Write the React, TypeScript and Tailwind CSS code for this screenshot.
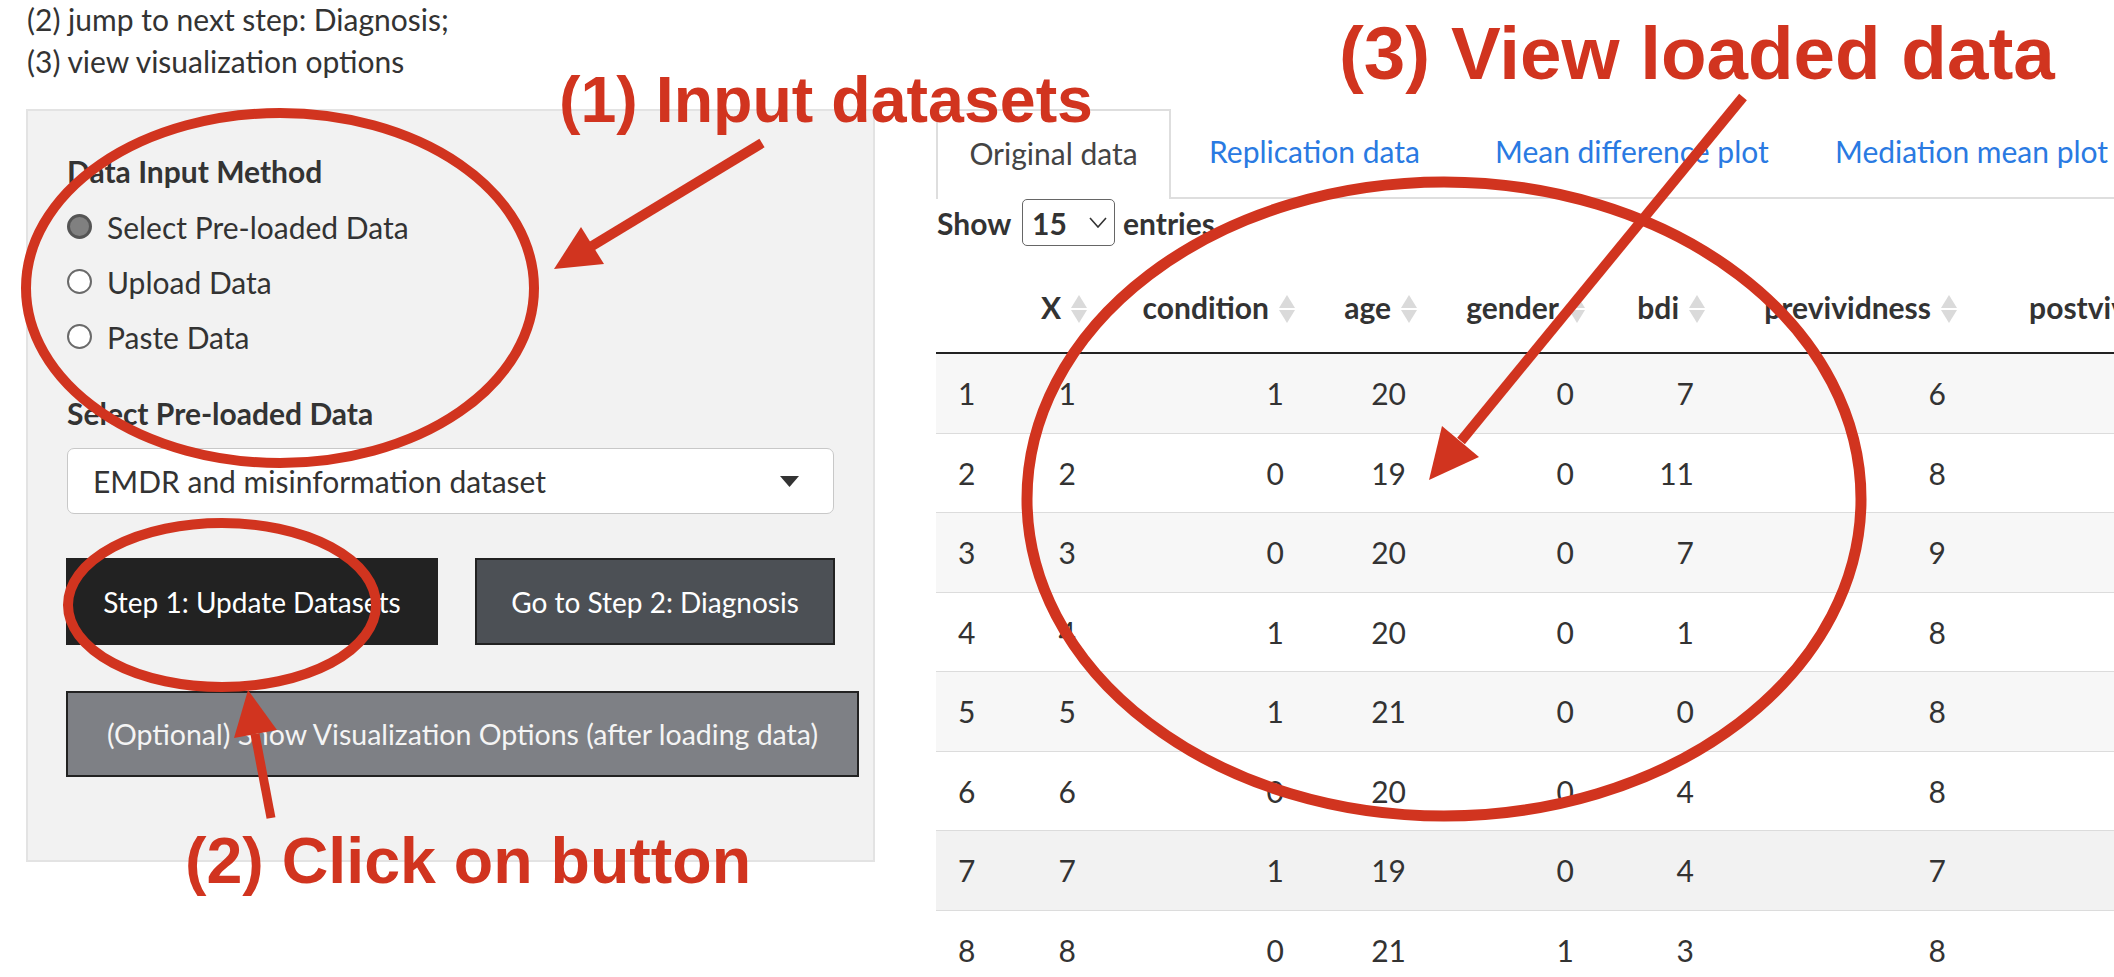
import React from "react";

const rows: number[][] = [
  [1, 1, 20, 0, 7, 6],
  [2, 0, 19, 0, 11, 8],
  [3, 0, 20, 0, 7, 9],
  [4, 1, 20, 0, 1, 8],
  [5, 1, 21, 0, 0, 8],
  [6, 0, 20, 0, 4, 8],
  [7, 1, 19, 0, 4, 7],
  [8, 0, 21, 1, 3, 8],
];

const colW = [
  "w-[64px]",
  "w-[107px]",
  "w-[208px]",
  "w-[122px]",
  "w-[168px]",
  "w-[120px]",
  "w-[252px]",
  "w-[280px]",
];

const headers = ["X", "condition", "age", "gender", "bdi", "prevividness", "postvividness"];

const rowBg = [
  "bg-[#f7f7f7]",
  "bg-white",
  "bg-[#f7f7f7]",
  "bg-white",
  "bg-[#f7f7f7]",
  "bg-white",
  "bg-[#f2f2f2]",
  "bg-white",
];

function SortIcon() {
  return (
    <svg width="16" height="28" viewBox="0 0 16 28" className="ml-[10px] mt-[4px] shrink-0">
      <polygon points="8,0 16,13 0,13" fill="#dadada" />
      <polygon points="0,15 16,15 8,28" fill="#dadada" />
    </svg>
  );
}

function Radio({ checked, label }: { checked?: boolean; label: string }) {
  return (
    <div className="flex items-center h-[55px] gap-[15px]">
      {checked ? (
        <div className="w-[25px] h-[25px] rounded-full border-[3px] border-[#555] bg-[#808080] shrink-0" />
      ) : (
        <div className="w-[25px] h-[25px] rounded-full border-2 border-[#6a6a6a] bg-white shrink-0" />
      )}
      <span>{label}</span>
    </div>
  );
}

function Overlay() {
  const red = "#d1341f";
  return (
    <>
      <svg
        className="absolute left-0 top-0 pointer-events-none"
        width="2114"
        height="977"
        viewBox="0 0 2114 977"
      >
        <g fill="none" stroke={red} strokeWidth="10">
          <ellipse cx="280" cy="288" rx="254" ry="175" />
          <ellipse cx="222" cy="605" rx="154" ry="82" />
          <ellipse cx="1444" cy="499" rx="417" ry="317" strokeWidth="11" />
          <line x1="762" y1="143" x2="592" y2="246" strokeWidth="10" />
          <line x1="271" y1="818" x2="255" y2="734" strokeWidth="9" />
          <line x1="1743" y1="97" x2="1461" y2="441" strokeWidth="10" />
        </g>
        <g fill={red}>
          <polygon points="554,269 581,227 604,264" />
          <polygon points="248,690 234,738 277,730" />
          <polygon points="1429,480 1442,426 1479,457" />
        </g>
      </svg>
      <div className="absolute left-[559px] top-[68px] text-[64.5px] leading-none font-bold font-['Liberation_Sans',Arial,sans-serif] text-[#d1341f] whitespace-nowrap">
        (1) Input datasets
      </div>
      <div className="absolute left-[185px] top-[829px] text-[64.5px] leading-none font-bold font-['Liberation_Sans',Arial,sans-serif] text-[#d1341f] whitespace-nowrap">
        (2) Click on button
      </div>
      <div className="absolute left-[1339px] top-[16px] text-[74.6px] leading-none font-bold font-['Liberation_Sans',Arial,sans-serif] text-[#d1341f] whitespace-nowrap">
        (3) View loaded data
      </div>
    </>
  );
}

export default function App() {
  return (
    <div className="relative w-[2114px] h-[977px] overflow-hidden bg-white font-['Lato',sans-serif] text-[30px] leading-[42px] text-[#333]">
      <div className="flex items-start">
        {/* Left column */}
        <div className="ml-[26px] w-[849px] shrink-0">
          <div className="pl-[1px] -mt-[2px]">
            <p>(2) jump to next step: Diagnosis;</p>
            <p>(3) view visualization options</p>
          </div>
          <div className="mt-[27px] h-[753px] border-2 border-[#e3e3e3] bg-[#f2f2f2] pt-[39px] pl-[39px]">
            <div className="font-bold">Data Input Method</div>
            <div className="mt-[7px]">
              <Radio checked label="Select Pre-loaded Data" />
              <Radio label="Upload Data" />
              <Radio label="Paste Data" />
            </div>
            <div className="mt-[28px] font-bold">Select Pre-loaded Data</div>
            <div className="mt-[14px] w-[767px] h-[66px] bg-white border-[1.5px] border-[#c8c8c8] rounded-[7px] flex items-center justify-between pl-[25px] pr-[34px]">
              <span>EMDR and misinformation dataset</span>
              <svg width="19" height="11" viewBox="0 0 19 11">
                <polygon points="0,0 19,0 9.5,11" fill="#333" />
              </svg>
            </div>
            <div className="mt-[44px] flex gap-[37px] -ml-[1px] text-[28px]">
              <div className="w-[372px] h-[87px] bg-[#222] text-white flex items-center justify-center">
                Step 1: Update Datasets
              </div>
              <div className="w-[360px] h-[87px] bg-[#4c5055] border-2 border-[#222] text-white flex items-center justify-center">
                Go to Step 2: Diagnosis
              </div>
            </div>
            <div className="mt-[46px] -ml-[1px] w-[793px] h-[86px] bg-[#7e8085] border-2 border-[#222] text-[#f4f4f4] text-[28.5px] flex items-center justify-center whitespace-nowrap">
              (Optional) Show Visualization Options (after loading data)
            </div>
          </div>
        </div>

        {/* Right column */}
        <div className="ml-[61px] mt-[109px] w-[1178px] shrink-0 overflow-hidden">
          <div className="flex h-[90px] border-b-2 border-[#dedede] whitespace-nowrap">
            <div className="relative w-[235px] h-[90px] shrink-0 border-2 border-b-0 border-[#dedede] bg-white text-[#444] flex items-center justify-center pb-[4px]">
              Original data
            </div>
            <div className="w-[286px] shrink-0 pl-[38px] pb-[4px] flex items-center text-[#2a7ae2]">Replication data</div>
            <div className="w-[340px] shrink-0 pl-[38px] pb-[4px] flex items-center text-[#2a7ae2]">Mean difference plot</div>
            <div className="shrink-0 pl-[38px] pb-[4px] flex items-center text-[#2a7ae2]">Mediation mean plot</div>
          </div>

          <div className="flex items-center h-[47px] font-bold">
            <span className="w-[86px] pl-[1px]">Show</span>
            <div className="w-[93px] h-[47px] border-[1.5px] border-[#666] rounded-[5px] flex items-center justify-between pl-[9px] pr-[7px]">
              <span>15</span>
              <svg width="18" height="11" viewBox="0 0 18 11">
                <polyline points="1,1 9,10 17,1" fill="none" stroke="#333" strokeWidth="1.6" />
              </svg>
            </div>
            <span className="ml-[8px]">entries</span>
          </div>

          <div className="w-[1321px]">
            <div className="flex items-end h-[108px] pb-[24px] border-b-2 border-[#222] font-bold whitespace-nowrap">
              <div className={`${colW[0]} shrink-0`} />
              {headers.map((h, i) => (
                <div key={h} className={`${colW[i + 1]} shrink-0 flex items-center justify-end pr-[20px]`}>
                  <span>{h}</span>
                  <SortIcon />
                </div>
              ))}
            </div>
            {rows.map((r, ri) => (
              <div
                key={ri}
                className={`flex items-center h-[79.5px] border-b-[1.5px] border-[#dcdcdc] ${rowBg[ri]}`}
              >
                <div className={`${colW[0]} shrink-0 pl-[22px]`}>{ri + 1}</div>
                {r.map((v, ci) => (
                  <div key={ci} className={`${colW[ci + 1]} shrink-0 text-right pr-[31px]`}>
                    {v}
                  </div>
                ))}
                <div className={`${colW[7]} shrink-0`} />
              </div>
            ))}
          </div>
        </div>
      </div>
      <Overlay />
    </div>
  );
}
